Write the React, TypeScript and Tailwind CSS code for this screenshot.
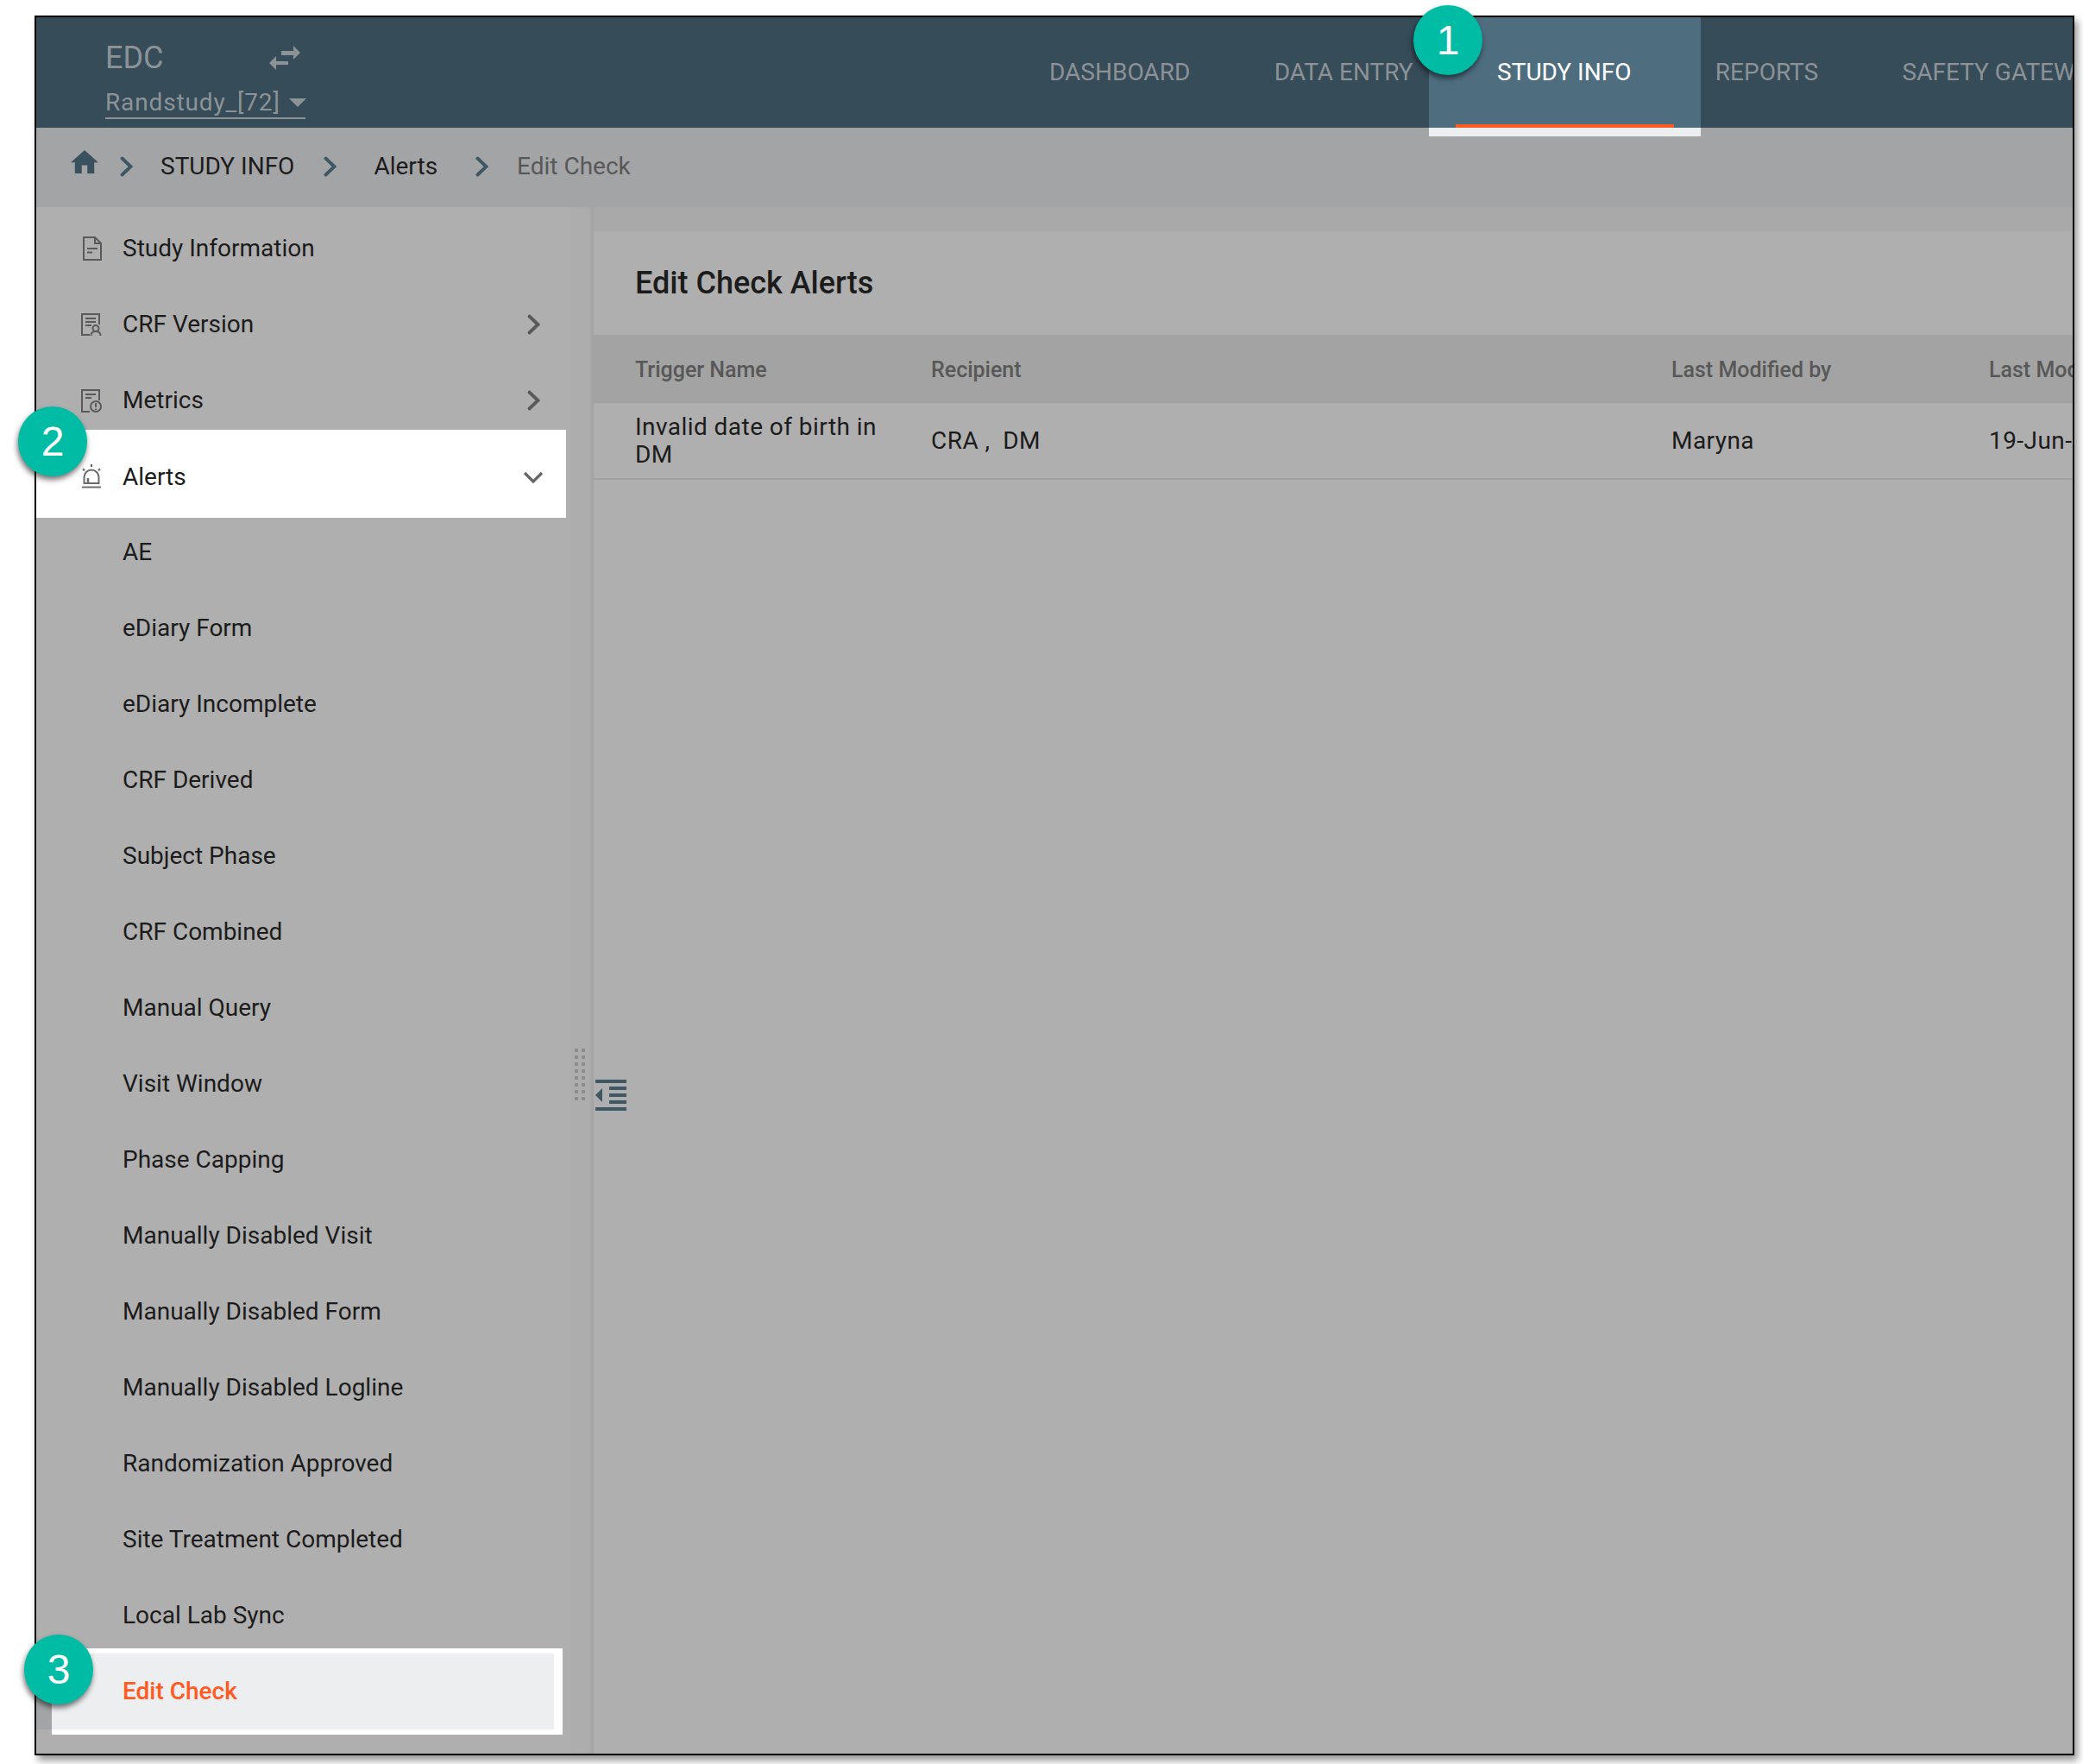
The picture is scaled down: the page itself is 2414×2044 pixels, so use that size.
const font = "font-['Roboto',sans-serif]";

function Chevron({ className }: { className: string }) {
  return (
    <svg viewBox="0 0 15 24" fill="none" className={className}>
      <path d="M2.500 2.500L12.500 12L2.500 21.500" stroke="currentColor" strokeWidth="3.800" strokeLinecap="round" />
    </svg>
  );
}

function DocIcon() {
  return (
    <svg viewBox="0 0 22 28" fill="none" stroke="#5a5a5a" strokeWidth="2" className="h-[28px] w-[22px]">
      <path d="M1 1h13l7 7v19H1z" />
      <path d="M14 1v7h7" />
      <path d="M5 14h12M5 18.500h6" />
    </svg>
  );
}

function CrfIcon() {
  return (
    <svg viewBox="0 0 24 26" fill="none" stroke="#5a5a5a" strokeWidth="2" className="h-[26px] w-[24px]">
      <path d="M10 25H1V1h20v12" />
      <path d="M5 6h12M5 10h12M5 14h7" />
      <circle cx="17" cy="17.500" r="3.500" />
      <path d="M11.500 26c0-3.500 2.500-5 5.500-5s5.500 1.500 5.500 5" />
    </svg>
  );
}

function MetricsIcon() {
  return (
    <svg viewBox="0 0 24 27" fill="none" stroke="#5a5a5a" strokeWidth="2" className="h-[27px] w-[24px]">
      <path d="M10 26H1V1h20v12" />
      <path d="M5 6h12M5 10h7" />
      <circle cx="17" cy="20" r="6" />
      <path d="M17 16v5M17 22.500v1.500" />
    </svg>
  );
}

function AlertIcon() {
  return (
    <svg viewBox="0 0 24 29" fill="none" stroke="#6a6a6a" strokeWidth="2" className="h-[29px] w-[24px]">
      <path d="M3.500 22v-7a8.500 8.500 0 0 1 17 0v7z" />
      <path d="M8 22v-6" strokeWidth="2.500" />
      <path d="M1 26.500h22" />
      <path d="M12 0v3M2 5.500l2 1.500M22 5.500l-2 1.500" strokeWidth="2.200" />
    </svg>
  );
}

function Badge({ n, className }: { n: number; className: string }) {
  return (
    <div
      className={`absolute z-20 flex h-[81px] w-[80px] items-center justify-center rounded-full bg-[#00bca5] font-['Liberation_Sans',sans-serif] text-[48px] leading-none text-white shadow-[-1px_4px_6px_rgba(0,0,0,0.55)] ${className}`}
    >
      {n}
    </div>
  );
}

type Item = { label: string; icon?: React.ReactNode; arrow?: boolean };

const topItems: Item[] = [
  { label: 'Study Information', icon: <DocIcon /> },
  { label: 'CRF Version', icon: <CrfIcon />, arrow: true },
  { label: 'Metrics', icon: <MetricsIcon />, arrow: true },
];

const alertItems = [
  'AE',
  'eDiary Form',
  'eDiary Incomplete',
  'CRF Derived',
  'Subject Phase',
  'CRF Combined',
  'Manual Query',
  'Visit Window',
  'Phase Capping',
  'Manually Disabled Visit',
  'Manually Disabled Form',
  'Manually Disabled Logline',
  'Randomization Approved',
  'Site Treatment Completed',
  'Local Lab Sync',
];

const navItems = ['DASHBOARD', 'DATA ENTRY', 'STUDY INFO', 'REPORTS', 'SAFETY GATEWAY'];

export default function App() {
  return (
    <div className={`relative h-[2044px] w-[2414px] overflow-hidden bg-white ${font}`}>
      <Badge n={1} className="left-[1638px] top-[6px]" />
      <Badge n={2} className="left-[21px] top-[471px]" />
      <Badge n={3} className="left-[28px] top-[1894px]" />

      <div className="ml-[40px] mt-[18px] flex h-[2016px] w-[2364px] flex-col overflow-hidden border-2 border-black bg-[#afafaf] shadow-[4px_6px_8px_rgba(0,0,0,0.4)]">
        {/* Top bar */}
        <header className="relative z-10 flex h-[128px] shrink-0 bg-[#364c59]">
          <div className="w-[1125.300px] shrink-0 pl-[80px] pt-[24px]">
            <div className="flex h-[46px] items-center text-[36px] leading-none text-[#8c9397]">
              EDC
              <svg viewBox="0 0 36 28" className="ml-[122px] h-[28px] w-[36px]" fill="#8c9397">
                <path d="M14 6h14V0l8 8-8 8v-5H14z" />
                <path d="M22 18H8v-6l-8 8 8 8v-6h14z" />
              </svg>
            </div>
            <div className="mt-[12px] flex h-[36px] w-[232px] items-center border-b-2 border-[#8c9397] text-[28px] leading-none tracking-[0.85px] text-[#8c9397]">
              Randstudy_[72]
              <span className="ml-[10px] h-0 w-0 border-x-[10px] border-t-[10px] border-x-transparent border-t-[#8c9397]" />
            </div>
          </div>
          <nav className="flex">
            {navItems.map((item) =>
              item === 'STUDY INFO' ? (
                <div key={item} className="relative -ml-[30.300px] -mr-[32.300px] flex h-full items-center whitespace-nowrap bg-[#4e6e80] pl-[79px] pr-[81px] text-[28px] text-white">
                  {item}
                  <span className="absolute inset-x-[31px] bottom-0 h-[4px] bg-[#ff5a22]" />
                  <span className="absolute inset-x-0 top-full h-[10px] bg-[#edeef0]" />
                </div>
              ) : (
                <div key={item} className="flex h-full items-center whitespace-nowrap px-[48.700px] text-[28px] text-[#8c9295]">
                  {item}
                </div>
              ),
            )}
          </nav>
        </header>

        {/* Breadcrumb */}
        <div className="flex h-[92px] shrink-0 items-center bg-[#a3a4a6] pb-[2px] pl-[40px] text-[28px] leading-none text-[#1c1c1c]">
          <svg viewBox="2 3 20 17" className="h-[27px] w-[32px] -translate-y-[6px]" fill="#3a5260" preserveAspectRatio="none">
            <path d="M10 20v-6h4v6h5v-8h3L12 3 2 12h3v8z" />
          </svg>
          <Chevron className="ml-[25px] h-[24px] w-[15px] text-[#3e5764]" />
          <span className="ml-[32px]">STUDY INFO</span>
          <Chevron className="ml-[34px] h-[24px] w-[15px] text-[#3e5764]" />
          <span className="ml-[43px]">Alerts</span>
          <Chevron className="ml-[44px] h-[24px] w-[15px] text-[#3e5764]" />
          <span className="ml-[33px] text-[#585858]">Edit Check</span>
        </div>

        <div className="flex min-h-0 flex-1">
          {/* Sidebar */}
          <aside className="w-[620px] shrink-0 pt-[4px] text-[28px] leading-none text-[#1c1c1c]">
            {topItems.map((item) => (
              <div key={item.label} className="flex h-[88px] w-[614px] items-center pr-[30px]">
                <span className="flex w-[100px] justify-end pr-[24px]">{item.icon}</span>
                {item.label}
                {item.arrow && <Chevron className="ml-auto h-[24px] w-[15px] text-[#5a5a5a]" />}
              </div>
            ))}
            <div className="flex h-[102px] w-[614px] -translate-y-[10px] items-center bg-white pr-[26px] pt-[7px]">
              <span className="flex w-[100px] justify-end pr-[24px]"><AlertIcon /></span>
              Alerts
              <svg viewBox="0 0 24 14" fill="none" className="ml-auto h-[14px] w-[24px]">
                <path d="M2 2L12 12L22 2" stroke="#666" strokeWidth="3.200" />
              </svg>
            </div>
            <div className="-mt-[14px]">
              {alertItems.map((label) => (
                <div key={label} className="flex h-[88px] items-center pl-[100px]">
                  {label}
                </div>
              ))}
              <div className="relative h-[88px] w-[600px] bg-[#a3a4a6] pl-[18px]">
                <div className="flex h-full items-center bg-[#edeef0] pl-[82px] font-medium text-[#ff5a22]">Edit Check</div>
                <span className="absolute -right-[10px] -top-[6px] -bottom-[6px] left-[18px] border-y-[6px] border-r-[10px] border-white" />
              </div>
            </div>
          </aside>

          {/* Splitter */}
          <div className="relative w-[26px] shrink-0 bg-[#adadad] shadow-[inset_-4px_0_4px_-2px_rgba(0,0,0,0.08)]">
            <div className="absolute left-[4px] top-[975px] grid grid-cols-2 gap-[4px]">
              {Array.from({ length: 16 }).map((_, i) => (
                <span key={i} className="h-[4px] w-[4px] bg-[#8c8c8c]" />
              ))}
            </div>
          </div>

          {/* Main */}
          <main className="relative min-w-0 flex-1 pt-[28px]">
            <div className="absolute inset-x-0 top-0 h-[28px] bg-[#a9a9a9]" />
            <svg viewBox="0 0 36 36" className="absolute left-[2px] top-[1011px] z-10 h-[36px] w-[36px]" fill="#3f5663">
              <path d="M0 0h36v4H0zM16 8h20v4H16zM16 16h20v4H16zM16 24h20v4H16zM0 32h36v4H0zM8 10v16L0 18z" />
            </svg>
            <h1 className="flex h-[120px] items-center pl-[48px] text-[36px] font-medium leading-none text-[#1c1c1c]">Edit Check Alerts</h1>
            <div className="grid h-[79px] grid-cols-[343px_858px_368px_400px] items-center border-b-2 border-[#a0a0a0] bg-[#a3a3a3] pl-[48px] pt-[4px] text-[25px] font-medium whitespace-nowrap text-[#585858]">
              <span>Trigger Name</span>
              <span>Recipient</span>
              <span>Last Modified by</span>
              <span>Last Modified On</span>
            </div>
            <div className="grid h-[89px] grid-cols-[343px_858px_368px_400px] items-center border-b-2 border-[#a0a0a0] pl-[48px] pt-[1px] text-[28px] leading-[32px] tracking-[0.45px] text-[#1c1c1c]">
              <span className="w-[300px]">Invalid date of birth in DM</span>
              <span>CRA ,&nbsp; DM</span>
              <span>Maryna</span>
              <span className="whitespace-nowrap">19-Jun-2019</span>
            </div>
          </main>
        </div>
      </div>
    </div>
  );
}
